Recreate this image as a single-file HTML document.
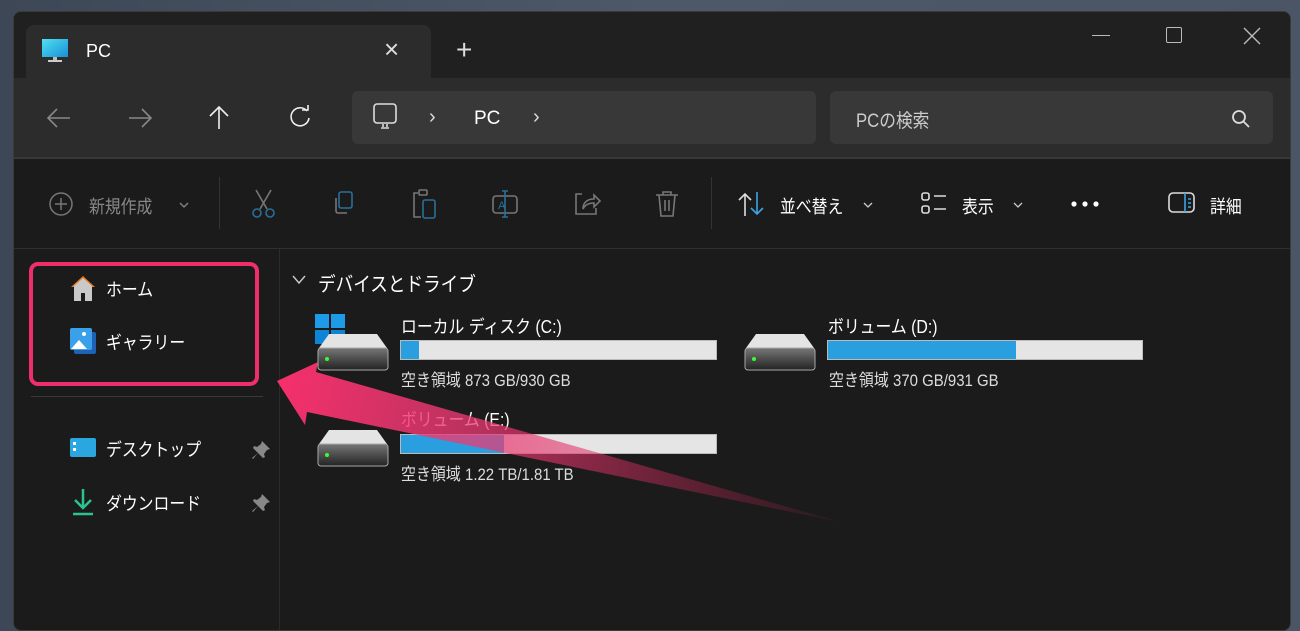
<!DOCTYPE html>
<html><head><meta charset="utf-8"><style>
*{margin:0;padding:0;box-sizing:border-box}
body{width:1300px;height:605px;overflow:hidden;background:linear-gradient(90deg,#3e4756,#4d5868 50%,#4b5565);font-family:"Liberation Sans","Noto Sans CJK JP",sans-serif;color:#fff;position:relative}
.win{position:absolute;left:13px;top:11px;width:1278px;height:620px;background:#1b1b1b;border-radius:8px;overflow:hidden;border:1px solid #3a3a3a}
.a{position:absolute}
.t{position:absolute;white-space:nowrap}
.j{display:inline-block;transform:scaleX(.88);transform-origin:left}
</style></head><body>
<div class="win">
 <div class="a" style="left:0;top:0;width:1278px;height:67px;background:#202020"></div>
 <div class="a" style="left:12px;top:13px;width:405px;height:60px;background:#2c2c2c;border-radius:8px 8px 0 0"></div>
 <div class="a" style="left:0;top:66px;width:1278px;height:80px;background:#2c2c2c"></div>
 <div class="a" style="left:0;top:145px;width:1278px;height:2px;background:#383838"></div>
 <div class="a" style="left:0;top:236px;width:1278px;height:1px;background:#2f2f2f"></div>
 <div class="a" style="left:265px;top:237px;width:1px;height:400px;background:#2b2b2b"></div>
 <div class="a" style="left:17px;top:384px;width:232px;height:1px;background:#3a3a3a"></div>
</div>
<svg class="a" style="left:41px;top:38px" width="28" height="26" viewBox="0 0 28 26"><defs><linearGradient id="m" x1="0" y1="0" x2="1" y2="1"><stop offset="0" stop-color="#4fe0f0"/><stop offset="1" stop-color="#1a8fd8"/></linearGradient></defs><rect x="1" y="1" width="26" height="18" fill="url(#m)"/><rect x="12" y="19" width="4" height="3" fill="#bbb"/><rect x="7" y="22" width="14" height="2" fill="#ccc"/></svg>
<div class="t" style="left:86px;top:41px;font-size:18px">PC</div>
<div class="t" style="left:384px;top:34px;font-size:26px;font-weight:300;color:#ddd">×</div>
<div class="t" style="left:456px;top:34px;font-size:28px;font-weight:300;color:#ddd">+</div>
<div class="a" style="left:1092px;top:35px;width:18px;height:1px;background:#bbb"></div>
<div class="a" style="left:1166px;top:27px;width:16px;height:16px;border:1.5px solid #bbb;border-radius:2px"></div>
<svg class="a" style="left:1243px;top:27px" width="18" height="18"><path d="M1 1L17 17M17 1L1 17" stroke="#bbb" stroke-width="1.4"/></svg>
<svg class="a" style="left:46px;top:106px" width="26" height="24" fill="none" stroke="#888" stroke-width="1.6"><path d="M24 12H3M11 3L2 12L11 21"/></svg>
<svg class="a" style="left:127px;top:106px" width="26" height="24" fill="none" stroke="#888" stroke-width="1.6"><path d="M2 12H23M15 3L24 12L15 21"/></svg>
<svg class="a" style="left:207px;top:104px" width="24" height="26" fill="none" stroke="#eee" stroke-width="1.6"><path d="M12 25V3M3 12L12 3L21 12"/></svg>
<svg class="a" style="left:288px;top:105px" width="24" height="24" fill="none" stroke="#eee" stroke-width="1.6"><path d="M19 6A9 9 0 1 0 21 13"/><path d="M14 5H20V0"/></svg>
<div class="a" style="left:352px;top:91px;width:464px;height:53px;background:#383838;border-radius:6px"></div>
<svg class="a" style="left:372px;top:103px" width="28" height="28" fill="none" stroke="#ddd" stroke-width="1.6"><rect x="2" y="1" width="22" height="19" rx="3"/><path d="M9 25h8M11 21v3M15 21v3"/></svg>
<div class="t" style="left:429px;top:106px;font-size:20px;color:#ddd">›</div>
<div class="t" style="left:474px;top:108px;font-size:19px">PC</div>
<div class="t" style="left:533px;top:106px;font-size:20px;color:#ddd">›</div>
<div class="a" style="left:830px;top:91px;width:443px;height:53px;background:#383838;border-radius:6px"></div>
<div class="t" style="left:856px;top:106px;font-size:19px;color:#ccc"><span class="j">PCの検索</span></div>
<svg class="a" style="left:1230px;top:108px" width="22" height="22" fill="none" stroke="#ddd" stroke-width="1.8"><circle cx="9" cy="9" r="6"/><path d="M13.5 13.5L19 19"/></svg>
<svg class="a" style="left:48px;top:191px" width="26" height="26" fill="none" stroke="#777" stroke-width="1.5"><circle cx="13" cy="13" r="11"/><path d="M13 7v12M7 13h12"/></svg>
<div class="t" style="left:89px;top:193px;font-size:18px;color:#888"><span class="j">新規作成</span></div>
<svg class="a" style="left:179px;top:201px" width="10" height="8" fill="none" stroke="#888" stroke-width="1.3"><path d="M1 2l4 4 4-4"/></svg>
<div class="a" style="left:219px;top:177px;width:1px;height:52px;background:#333"></div>
<svg class="a" style="left:250px;top:188px" width="28" height="32" fill="none" stroke-width="1.6"><path d="M6 2L17 21M21 2L10 21" stroke="#777"/><circle cx="7" cy="25" r="4" stroke="#2a6f99"/><circle cx="20" cy="25" r="4" stroke="#2a6f99"/></svg>
<svg class="a" style="left:330px;top:190px" width="28" height="28" fill="none" stroke-width="1.6"><rect x="9" y="2" width="13" height="16" rx="2" stroke="#2a6f99"/><path d="M6 8v13a2 2 0 0 0 2 2h9" stroke="#777"/></svg>
<svg class="a" style="left:410px;top:188px" width="30" height="32" fill="none" stroke-width="1.6"><path d="M8 5H4v24h7" stroke="#777"/><rect x="9" y="2" width="8" height="5" rx="1" stroke="#777"/><rect x="13" y="12" width="12" height="18" rx="2" stroke="#2a6f99"/></svg>
<svg class="a" style="left:490px;top:189px" width="32" height="30" fill="none" stroke-width="1.6"><rect x="3" y="7" width="24" height="17" rx="3" stroke="#777"/><path d="M15 2v26M12 2h6M12 28h6" stroke="#2a6f99"/><text x="8" y="20" font-size="11" fill="#2a6f99" stroke="none" font-family="Liberation Sans">A</text></svg>
<svg class="a" style="left:572px;top:190px" width="30" height="28" fill="none" stroke="#777" stroke-width="1.6"><path d="M10 4H4v20h20v-6"/><path d="M11 19c0-7 5-10 11-10V5l6 6-6 6v-4c-5 0-9 2-11 6z"/></svg>
<svg class="a" style="left:654px;top:189px" width="26" height="30" fill="none" stroke="#777" stroke-width="1.6"><path d="M2 6h22M9 6V3h8v3M5 6l2 21h12l2-21M11 11v11M15 11v11"/></svg>
<div class="a" style="left:711px;top:177px;width:1px;height:52px;background:#333"></div>
<svg class="a" style="left:737px;top:191px" width="30" height="26" fill="none" stroke-width="1.6"><path d="M8 25V3M2 9l6-6 6 6" stroke="#ddd"/><path d="M20 1v22M14 17l6 6 6-6" stroke="#3ba4e6"/></svg>
<div class="t" style="left:780px;top:193px;font-size:18px"><span class="j">並べ替え</span></div>
<svg class="a" style="left:863px;top:201px" width="10" height="8" fill="none" stroke="#ccc" stroke-width="1.3"><path d="M1 2l4 4 4-4"/></svg>
<svg class="a" style="left:920px;top:191px" width="30" height="26" fill="none" stroke="#ddd" stroke-width="1.6"><rect x="2" y="2" width="7" height="7" rx="2"/><rect x="2" y="15" width="7" height="7" rx="2"/><path d="M14 5h12M14 18h12"/></svg>
<div class="t" style="left:962px;top:193px;font-size:18px"><span class="j">表示</span></div>
<svg class="a" style="left:1013px;top:201px" width="10" height="8" fill="none" stroke="#ccc" stroke-width="1.3"><path d="M1 2l4 4 4-4"/></svg>
<svg class="a" style="left:1070px;top:200px" width="30" height="8" fill="#fff"><circle cx="4" cy="4" r="2.6"/><circle cx="15" cy="4" r="2.6"/><circle cx="26" cy="4" r="2.6"/></svg>
<svg class="a" style="left:1167px;top:191px" width="30" height="24" fill="none" stroke-width="1.6"><rect x="2" y="2" width="25" height="19" rx="4" stroke="#ddd"/><path d="M18 2v19" stroke="#3ba4e6"/><path d="M21 8h3M21 12h3M21 16h3" stroke="#3ba4e6"/></svg>
<div class="t" style="left:1210px;top:193px;font-size:18px"><span class="j">詳細</span></div>
<div class="a" style="left:29px;top:262px;width:230px;height:124px;border:4px solid #f02e6c;border-radius:9px"></div>
<svg class="a" style="left:69px;top:274px" width="28" height="28"><path d="M2 13L14 2L26 13Z" fill="#e87a1c"/><path d="M5 12v15h7v-8h4v8h7V12L14 4z" fill="#c9c9c9"/></svg>
<div class="t" style="left:106px;top:276px;font-size:18px"><span class="j">ホーム</span></div>
<svg class="a" style="left:69px;top:327px" width="28" height="28"><rect x="5" y="5" width="22" height="22" rx="2" fill="#1e62b8"/><rect x="1" y="1" width="22" height="22" rx="2" fill="#3aa0ea"/><path d="M2 22L10 13L18 22Z" fill="#fff"/><circle cx="15" cy="7" r="2" fill="#fff"/></svg>
<div class="t" style="left:106px;top:329px;font-size:18px"><span class="j">ギャラリー</span></div>
<svg class="a" style="left:69px;top:436px" width="28" height="24"><rect x="1" y="2" width="26" height="19" rx="2" fill="#2aa7e0"/><rect x="4" y="6" width="3" height="3" fill="#fff"/><rect x="4" y="12" width="3" height="3" fill="#fff"/></svg>
<div class="t" style="left:106px;top:436px;font-size:18px"><span class="j">デスクトップ</span></div>
<svg class="a" style="left:250px;top:439px" width="22" height="22" fill="#888"><path d="M12 2l8 8-3 1-3 4 1 3-2 1-5-5-5 6-1-1 6-5-5-5 1-2 3 1 4-3z"/></svg>
<svg class="a" style="left:70px;top:487px" width="26" height="30" fill="none" stroke-width="2.5"><path d="M13 2v18M5 13l8 8 8-8" stroke="#2cc290"/><path d="M3 27h20" stroke="#2cc290"/></svg>
<div class="t" style="left:106px;top:490px;font-size:18px"><span class="j">ダウンロード</span></div>
<svg class="a" style="left:250px;top:492px" width="22" height="22" fill="#888"><path d="M12 2l8 8-3 1-3 4 1 3-2 1-5-5-5 6-1-1 6-5-5-5 1-2 3 1 4-3z"/></svg>
<svg class="a" style="left:292px;top:275px" width="14" height="10" fill="none" stroke="#ccc" stroke-width="1.4"><path d="M1 1l6 7 6-7"/></svg>
<div class="t" style="left:318px;top:268px;font-size:20px"><span class="j">デバイスとドライブ</span></div>
<svg class="a" style="left:315px;top:314px" width="32" height="30"><rect x="0" y="0" width="14" height="14" fill="#1e9be8"/><rect x="16" y="0" width="14" height="14" fill="#1e9be8"/><rect x="0" y="16" width="14" height="14" fill="#0d84d4"/><rect x="16" y="16" width="14" height="14" fill="#0d84d4"/></svg>
<svg class="a" style="left:317px;top:332px" width="72" height="40"><defs><linearGradient id="d" x1="0" y1="0" x2="0" y2="1"><stop offset="0" stop-color="#777"/><stop offset="1" stop-color="#222"/></linearGradient></defs><path d="M12 2H60L70 16H2Z" fill="#e4e4e4"/><rect x="1" y="16" width="70" height="22" rx="3" fill="url(#d)" stroke="#aaa"/><circle cx="10" cy="27" r="2" fill="#3f3"/></svg>
<div class="t" style="left:401px;top:313px;font-size:18px"><span class="j">ローカル ディスク (C:)</span></div>
<div class="a" style="left:400px;top:340px;width:317px;height:20px;background:#e5e5e5;border:1px solid #bbb"></div>
<div class="a" style="left:401px;top:341px;width:18px;height:18px;background:#2a9fe0"></div>
<div class="t" style="left:401px;top:366px;font-size:17px;color:#ddd"><span class="j">空き領域 873 GB/930 GB</span></div>
<svg class="a" style="left:744px;top:332px" width="72" height="40"><path d="M12 2H60L70 16H2Z" fill="#e4e4e4"/><rect x="1" y="16" width="70" height="22" rx="3" fill="url(#d)" stroke="#aaa"/><circle cx="10" cy="27" r="2" fill="#3f3"/></svg>
<div class="t" style="left:828px;top:313px;font-size:18px"><span class="j">ボリューム (D:)</span></div>
<div class="a" style="left:827px;top:340px;width:316px;height:20px;background:#e5e5e5;border:1px solid #bbb"></div>
<div class="a" style="left:828px;top:341px;width:188px;height:18px;background:#2a9fe0"></div>
<div class="t" style="left:829px;top:366px;font-size:17px;color:#ddd"><span class="j">空き領域 370 GB/931 GB</span></div>
<svg class="a" style="left:317px;top:428px" width="72" height="40"><path d="M12 2H60L70 16H2Z" fill="#e4e4e4"/><rect x="1" y="16" width="70" height="22" rx="3" fill="url(#d)" stroke="#aaa"/><circle cx="10" cy="27" r="2" fill="#3f3"/></svg>
<div class="t" style="left:401px;top:406px;font-size:18px"><span class="j">ボリューム (E:)</span></div>
<div class="a" style="left:400px;top:434px;width:317px;height:20px;background:#e5e5e5;border:1px solid #bbb"></div>
<div class="a" style="left:401px;top:435px;width:103px;height:18px;background:#2a9fe0"></div>
<div class="t" style="left:401px;top:460px;font-size:17px;color:#ddd"><span class="j">空き領域 1.22 TB/1.81 TB</span></div>
<svg class="a" style="left:0;top:0" width="1300" height="605"><defs><linearGradient id="ar" gradientUnits="userSpaceOnUse" x1="280" y1="385" x2="840" y2="522"><stop offset="0" stop-color="#f5306c" stop-opacity="1"/><stop offset="0.35" stop-color="#ee3a74" stop-opacity="0.75"/><stop offset="1" stop-color="#c0204f" stop-opacity="0.1"/></linearGradient></defs><path d="M277 381L318 362L316 372L840 522L307 412L305 425Z" fill="url(#ar)"/></svg>
</body></html>
